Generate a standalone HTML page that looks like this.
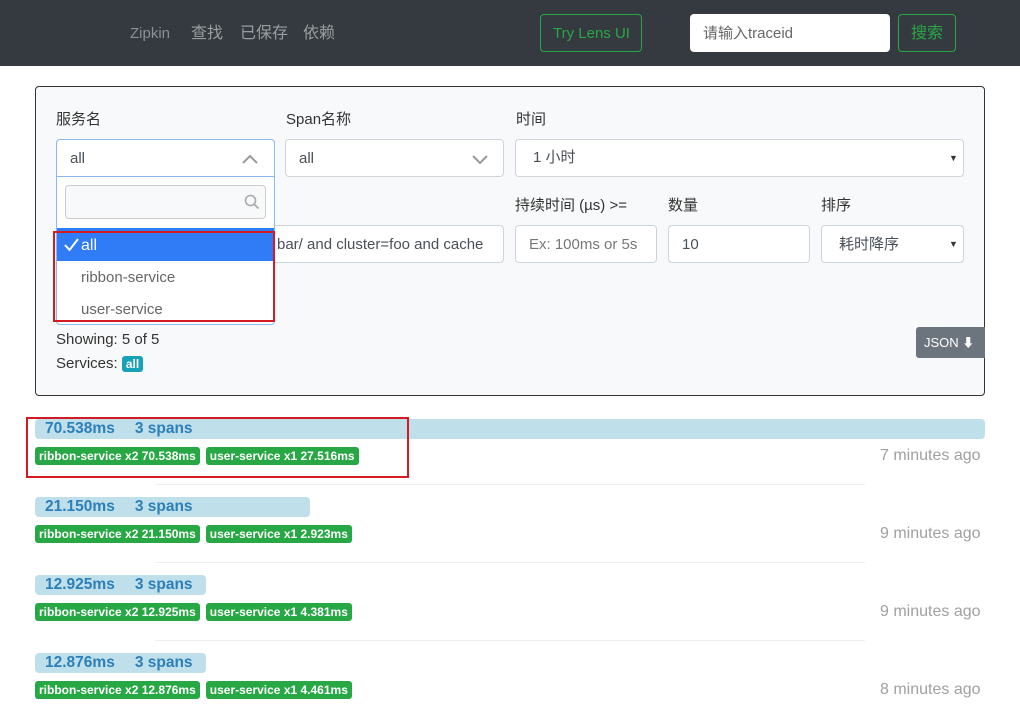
<!DOCTYPE html>
<html><head><meta charset="utf-8"><style>
*{box-sizing:border-box;margin:0;padding:0}
body{width:1020px;height:713px;position:relative;background:#fff;font-family:"Liberation Sans","Noto Sans CJK SC",sans-serif;color:#333;overflow:hidden}
.a{position:absolute;white-space:nowrap}
.hdr{left:0;top:0;width:1020px;height:66px;background:#343a40}
.nav{color:#9a9da0;font-size:16px;top:23px;line-height:22px}
.inp{background:#fff;border:1px solid #ced4da;border-radius:4px;height:38px;font-size:15px;line-height:36px;padding:0 0 0 13px;color:#495057}
.lbl{font-size:15px;color:#333;line-height:20px}
.bar{background:#bfdfeb;border-radius:4px;height:20px;font-size:15.5px;line-height:20px;font-weight:bold;color:#2c7fb8;padding:0 0 0 10px}
.bar b{margin-left:20px}
.row{display:flex;gap:6px}
.bdg{background:#28a745;color:#fff;font-size:12px;line-height:18px;font-weight:bold;border-radius:3px;height:18px;padding:0 4px;letter-spacing:0}
.ago{color:#a0a0a0;font-size:16px;line-height:20px}
.sep{height:1px;background:#eee;left:155px;width:710px}
.caret{font-size:9px;color:#333}
</style></head><body>
<div class="a hdr"></div>
<div class="a" style="left:130px;top:25px;color:#8c8f93;font-size:15px">Zipkin</div>
<div class="a nav" style="left:191px">查找</div>
<div class="a nav" style="left:240px">已保存</div>
<div class="a nav" style="left:303px">依赖</div>
<div class="a" style="left:540px;top:14px;width:102px;height:38px;border:1px solid #28a745;border-radius:4px;color:#28a745;font-size:15px;line-height:38px;padding:0 0 0 12px">Try Lens UI</div>
<div class="a" style="left:690px;top:14px;width:200px;height:38px;background:#fff;border-radius:4px;color:#666;font-size:15px;line-height:40px;padding:0 0 0 13px">请输入traceid</div>
<div class="a" style="left:898px;top:14px;width:58px;height:38px;border:1px solid #28a745;border-radius:4px;color:#28a745;font-size:16px;line-height:38px;padding:0 0 0 12px">搜索</div>

<div class="a" style="left:35px;top:86px;width:950px;height:310px;background:#f8f9fa;border:1px solid #333;border-radius:4px"></div>
<div class="a lbl" style="left:56px;top:110px">服务名</div>
<div class="a lbl" style="left:286px;top:110px">Span名称</div>
<div class="a lbl" style="left:516px;top:110px">时间</div>
<div class="a inp" style="left:56px;top:139px;width:219px;border-color:#8bb8ee;border-radius:4px 4px 0 0;line-height:38px">all</div>
<svg class="a" style="left:241px;top:153px" width="18" height="12"><path d="M2 10 L9 3 L16 10" stroke="#999" stroke-width="2" fill="none"/></svg>
<div class="a inp" style="left:285px;top:139px;width:219px;line-height:38px">all</div>
<svg class="a" style="left:471px;top:153px" width="18" height="12"><path d="M2 3 L9 10 L16 3" stroke="#999" stroke-width="2" fill="none"/></svg>
<div class="a inp" style="left:515px;top:139px;width:449px;padding-left:17px">1 小时</div>
<div class="a caret" style="left:949px;top:153px">▼</div>

<div class="a lbl" style="left:515px;top:196px">持续时间 (µs) &gt;=</div>
<div class="a lbl" style="left:668px;top:196px">数量</div>
<div class="a lbl" style="left:821px;top:196px">排序</div>
<div class="a inp" style="left:260px;top:225px;width:244px;padding-left:16px;overflow:hidden;line-height:38px">bar/ and cluster=foo and cache</div>
<div class="a inp" style="left:515px;top:225px;width:142px;color:#777;line-height:38px">Ex: 100ms or 5s</div>
<div class="a inp" style="left:668px;top:225px;width:142px;line-height:38px">10</div>
<div class="a inp" style="left:821px;top:225px;width:143px;padding-left:17px;line-height:38px">耗时降序</div>
<div class="a caret" style="left:949px;top:239px">▼</div>

<div class="a" style="left:56px;top:177px;width:219px;height:148px;background:#fff;border:1px solid #8bb8ee;border-top:none;border-radius:0 0 4px 4px"></div>
<div class="a" style="left:65px;top:185px;width:201px;height:34px;background:#f8f9fa;border:1px solid #ccc;border-radius:4px"></div>
<svg class="a" style="left:244px;top:194px" width="16" height="16"><circle cx="6.5" cy="6.5" r="5" stroke="#aaa" stroke-width="1.6" fill="none"/><path d="M10 10 L14.5 14.5" stroke="#aaa" stroke-width="1.8"/></svg>
<div class="a" style="left:57px;top:228px;width:217px;height:33px;background:#2f7cf6"></div>
<svg class="a" style="left:63px;top:237px" width="18" height="16"><path d="M2 8 L6.5 13 L15 2" stroke="#fff" stroke-width="2" fill="none"/></svg>
<div class="a" style="left:81px;top:236px;color:#fff;font-size:16px;line-height:20px">all</div>
<div class="a" style="left:81px;top:268px;color:#666;font-size:15px;line-height:20px">ribbon-service</div>
<div class="a" style="left:81px;top:300px;color:#666;font-size:15px;line-height:20px">user-service</div>
<div class="a" style="left:53px;top:231px;width:222px;height:91px;border:2px solid #d41b24"></div>

<div class="a" style="left:56px;top:330px;font-size:15px;line-height:20px">Showing: 5 of 5</div>
<div class="a" style="left:56px;top:354px;font-size:15px;line-height:20px">Services: <span style="background:#17a2b8;color:#fff;font-size:12px;font-weight:bold;border-radius:3px;padding:1px 4px">all</span></div>
<div class="a" style="left:916px;top:327px;width:69px;height:31px;background:#6c757d;border-radius:3px 0 0 3px;color:#fff;font-size:13px;line-height:31px;padding:0 0 0 8px">JSON <span style="font-size:12px">⬇</span></div>

<div class="a bar" style="left:35px;top:419px;width:950px">70.538ms<b>3 spans</b></div>
<div class="a row" style="left:35px;top:447px"><span class="bdg">ribbon-service x2 70.538ms</span><span class="bdg">user-service x1 27.516ms</span></div>
<div class="a ago" style="left:880px;top:446px">7 minutes ago</div>
<div class="a" style="left:26px;top:417px;width:383px;height:61px;border:2px solid #d41b24"></div>
<div class="a sep" style="top:484px"></div>

<div class="a bar" style="left:35px;top:497px;width:275px">21.150ms<b>3 spans</b></div>
<div class="a row" style="left:35px;top:525px"><span class="bdg">ribbon-service x2 21.150ms</span><span class="bdg">user-service x1 2.923ms</span></div>
<div class="a ago" style="left:880px;top:524px">9 minutes ago</div>
<div class="a sep" style="top:562px"></div>

<div class="a bar" style="left:35px;top:575px;width:171px">12.925ms<b>3 spans</b></div>
<div class="a row" style="left:35px;top:603px"><span class="bdg">ribbon-service x2 12.925ms</span><span class="bdg">user-service x1 4.381ms</span></div>
<div class="a ago" style="left:880px;top:602px">9 minutes ago</div>
<div class="a sep" style="top:640px"></div>

<div class="a bar" style="left:35px;top:653px;width:171px">12.876ms<b>3 spans</b></div>
<div class="a row" style="left:35px;top:681px"><span class="bdg">ribbon-service x2 12.876ms</span><span class="bdg">user-service x1 4.461ms</span></div>
<div class="a ago" style="left:880px;top:680px">8 minutes ago</div>
</body></html>
